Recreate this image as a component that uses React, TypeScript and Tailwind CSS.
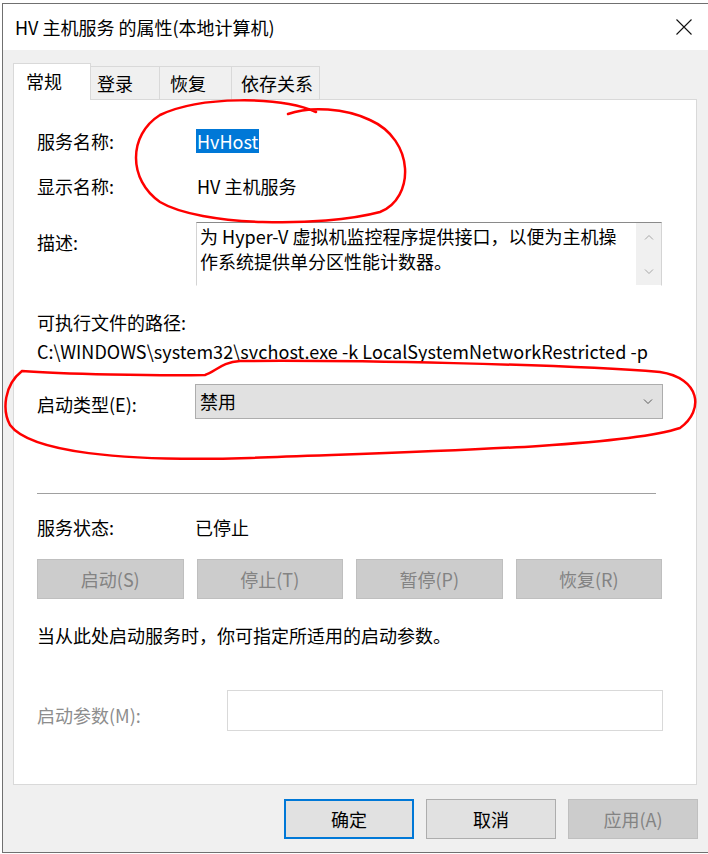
import React from "react";

const tabs = [
  { label: "常规", w: "w-[78px] pl-[12px]" },
  { label: "登录", w: "w-[69px] pl-[6px]" },
  { label: "恢复", w: "w-[72px] pl-[10px]" },
  { label: "依存关系", w: "w-[88px] pl-[9px]" },
];

const actions = ["启动(S)", "停止(T)", "暂停(P)", "恢复(R)"];

function Chevron({ up = false, color = "#5a5a5a" }: { up?: boolean; color?: string }) {
  return (
    <svg width="10" height="6" viewBox="0 0 10 6" fill="none">
      <path d={up ? "M1 5.5 L5 1.5 L9 5.5" : "M1 0.5 L5 4.5 L9 0.5"} stroke={color} strokeWidth="1" />
    </svg>
  );
}

export default function App() {
  return (
    <div className="relative h-[854px] w-[708px] overflow-hidden bg-white font-['Noto_Sans_CJK_SC',sans-serif] text-[18px] text-black">
      <div className="pl-[2px] pt-[3px]">
        <div className="w-[706px] border-b border-l border-t border-[#707070]">
          {/* title bar */}
          <div className="flex h-[46px] items-center justify-between bg-white pl-[12px] pr-[16px]">
            <span className="leading-none">HV 主机服务 的属性(本地计算机)</span>
            <svg width="16" height="16" viewBox="0 0 16 16">
              <path d="M0.5 0.5 L15.5 15.5 M15.5 0.5 L0.5 15.5" stroke="#111" strokeWidth="1.1" />
            </svg>
          </div>

          <div className="bg-[#f0f0f0] px-[10px] pb-[13px] pt-[13px]">
            {/* tabs */}
            <div className="flex h-[36px] items-end">
              {tabs.map((t, i) =>
                i === 0 ? (
                  <div
                    key={t.label}
                    className={`${t.w} relative z-10 -mb-px flex h-[37px] items-center border-x border-t border-[#d9d9d9] bg-white pb-[2px]`}
                  >
                    {t.label}
                  </div>
                ) : (
                  <div
                    key={t.label}
                    className={`${t.w} flex h-[33px] items-center border-r border-t border-[#d9d9d9] bg-[#f0f0f0]`}
                  >
                    {t.label}
                  </div>
                )
              )}
            </div>

            {/* general page */}
            <div className="h-[686px] w-[684px] border border-[#d9d9d9] bg-white pl-[23px] pr-[33px] pt-[29px]">
              <div className="flex h-[24px] items-center">
                <span className="w-[159px]">服务名称:</span>
                <span className="bg-[#0078d7] px-px leading-[24px] text-white">HvHost</span>
              </div>
              <div className="mt-[21px] flex h-[24px] items-center">
                <span className="w-[160px]">显示名称:</span>
                <span>HV 主机服务</span>
              </div>

              <div className="mt-[24px] flex items-start">
                <span className="mt-[8px] h-[24px] w-[159px] leading-[24px]">描述:</span>
                <div className="flex h-[64px] w-[466px] border border-b-white border-l-[#d4d4d4] border-r-[#d4d4d4] border-t-[#8a8a8a]">
                  <p className="flex-1 pl-[3px] pt-[1px] leading-[25px]">
                    为 Hyper-V 虚拟机监控程序提供接口，以便为主机操
                    <br />
                    作系统提供单分区性能计数器。
                  </p>
                  <div className="flex w-[25px] flex-col items-center justify-between bg-[#f0f0f0] pb-[10px] pt-[11px]">
                    <Chevron up color="#a6a6a6" />
                    <Chevron color="#a6a6a6" />
                  </div>
                </div>
              </div>

              <div className="mt-[24px] h-[24px] leading-[24px]">可执行文件的路径:</div>
              <div className="mt-[5px] h-[24px] whitespace-nowrap leading-[24px] tracking-[0.06px]">
                C:\WINDOWS\system32\svchost.exe -k LocalSystemNetworkRestricted -p
              </div>

              <div className="mt-[21px] flex h-[35px] items-center">
                <span className="mt-[5px] w-[158px]">启动类型(E):</span>
                <div className="flex h-[35px] w-[468px] items-center justify-between border border-[#adadad] bg-[#e1e1e1] pl-[4px] pr-[9px]">
                  <span>禁用</span>
                  <Chevron />
                </div>
              </div>

              <div className="mt-[74px] h-px w-[619px] bg-[#a0a0a0]" />

              <div className="mt-[21px] flex h-[24px] items-center">
                <span className="w-[158px]">服务状态:</span>
                <span>已停止</span>
              </div>

              <div className="mt-[20px] grid h-[40px] w-[625px] grid-cols-4 gap-x-[13px]">
                {actions.map((a) => (
                  <div
                    key={a}
                    className="flex items-center justify-center border border-[#bfbfbf] bg-[#cccccc] text-[#838383]"
                  >
                    {a}
                  </div>
                ))}
              </div>

              <div className="mt-[24px] h-[24px] leading-[24px]">当从此处启动服务时，你可指定所适用的启动参数。</div>

              <div className="mt-[43px] flex items-start">
                <span className="mt-[13px] h-[24px] w-[190px] leading-[24px] text-[#8d8d8d]">启动参数(M):</span>
                <div className="h-[41px] w-[436px] border border-[#d9d9d9] bg-white" />
              </div>
            </div>

            {/* dialog buttons */}
            <div className="mt-[14px] flex h-[40px] justify-end gap-x-[12px]">
              <div className="flex w-[130px] items-center justify-center border-2 border-[#0078d7] bg-[#e1e1e1]">确定</div>
              <div className="flex w-[130px] items-center justify-center border border-[#adadad] bg-[#e1e1e1]">取消</div>
              <div className="flex w-[130px] items-center justify-center border border-[#bfbfbf] bg-[#cccccc] text-[#838383]">
                应用(A)
              </div>
            </div>
          </div>
        </div>
      </div>

      {/* hand-drawn red marks */}
      <svg
        className="pointer-events-none absolute left-0 top-0"
        width="708"
        height="854"
        viewBox="0 0 708 854"
        fill="none"
        stroke="#ff0000"
        strokeWidth="2.5"
        strokeLinecap="round"
        strokeLinejoin="round"
      >
        <path d="M316 112 C280 96 200 96 160 115 C128 135 128 180 160 202 C200 226 320 228 380 212 C415 198 415 140 370 120 C345 108 310 106 288 114" />
        <path d="M22 371 C60 374 160 376 205 375 C215 372 222 362 240 361 C350 360 560 364 660 372 C700 378 705 410 680 428 C620 448 400 452 250 458 C120 462 30 452 10 425 C2 410 4 385 22 371" />
      </svg>
    </div>
  );
}
